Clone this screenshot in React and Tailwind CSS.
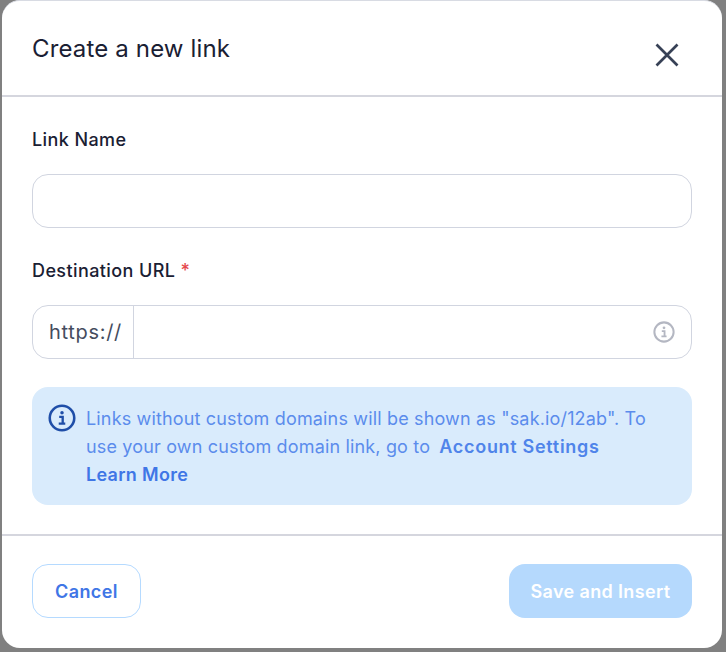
import React from "react";

function InfoIcon({ className }) {
  return (
    <svg viewBox="0 0 24 24" fill="none" className={className}>
      <circle cx="12" cy="12" r="10.5" stroke="currentColor" strokeWidth="2.2" />
      <circle cx="12" cy="7.4" r="1.5" fill="currentColor" />
      <path d="M9.6 11h3v5.6M9.2 16.8h5.6" stroke="currentColor" strokeWidth="2" />
    </svg>
  );
}

export default function App() {
  return (
    <div className="w-[726px] h-[652px] bg-[#808080] pl-[2px] pr-[4px] pb-[4px] overflow-hidden font-['Inter',sans-serif]">
      <div className="h-full bg-white rounded-[18px] border-t border-[#d8dbe3] flex flex-col">
        <div className="h-[94px] shrink-0 pl-[30px] pr-[43px] flex justify-between">
          <h1 className="mt-[32px] text-[24px] leading-[32px] font-normal text-[#1a2033] tracking-[0.15px]">Create a new link</h1>
          <button className="mt-[42px] w-[24px] h-[24px] flex items-center justify-center text-[#374156]">
            <svg viewBox="0 0 24 24" width="24" height="24" fill="none" stroke="currentColor" strokeWidth="2.7">
              <path d="M1.5 1.5 L22.5 22.5 M22.5 1.5 L1.5 22.5" />
            </svg>
          </button>
        </div>
        <div className="h-[2px] bg-[#d5d6de] shrink-0" />
        <div className="flex-1 pl-[30px] pr-[30px] pt-[31px] flex flex-col">
          <label className="text-[18px] leading-[24px] font-medium text-[#1a2033] tracking-[0.4px]">Link Name</label>
          <input className="mt-[22px] h-[54px] rounded-[16px] border border-[#d1d5e0] bg-white" />
          <label className="mt-[31px] text-[18px] leading-[24px] font-medium text-[#1a2033] tracking-[0.4px]">
            Destination URL <span className="text-[#e5484d]">*</span>
          </label>
          <div className="mt-[22px] h-[54px] rounded-[16px] border border-[#d1d5e0] flex items-center">
            <span className="h-full w-[101px] shrink-0 border-r border-[#d1d5e0] flex items-center pl-[16px] text-[20px] tracking-[0.7px] text-[#454c5e]">https://</span>
            <span className="flex-1" />
            <InfoIcon className="w-[22px] h-[22px] mr-[16px] text-[#b4b7c2]" />
          </div>
          <div className="mt-[28px] h-[118px] rounded-[16px] bg-[#d9ebfc] flex pl-[16px] pr-[16px] pt-[17px] gap-[10px]">
            <InfoIcon className="w-[28px] h-[28px] shrink-0 text-[#1f4ea8]" />
            <p className="mt-[1px] text-[18px] leading-[28px] tracking-[0.16px] text-[#5b8cec]">
              Links without custom domains will be shown as "sak.io/12ab". To use your own custom domain link, go to <span className="ml-[4px] font-semibold tracking-[0.7px] text-[#4f84ea]">Account Settings</span>
              <br />
              <span className="font-semibold tracking-[0.3px] text-[#3f76e6]">Learn More</span>
            </p>
          </div>
        </div>
        <div className="h-[2px] bg-[#d5d6de] shrink-0" />
        <div className="h-[112px] shrink-0 pl-[30px] pr-[30px] pt-[28px] flex justify-between items-start">
          <button className="w-[109px] h-[54px] rounded-[16px] border border-[#b5daff] bg-white text-[18px] tracking-[0.4px] font-semibold text-[#3f76e6]">Cancel</button>
          <button className="w-[183px] h-[54px] rounded-[16px] bg-[#b5d9fd] text-[18px] tracking-[0.35px] font-semibold text-white">Save and Insert</button>
        </div>
      </div>
    </div>
  );
}
